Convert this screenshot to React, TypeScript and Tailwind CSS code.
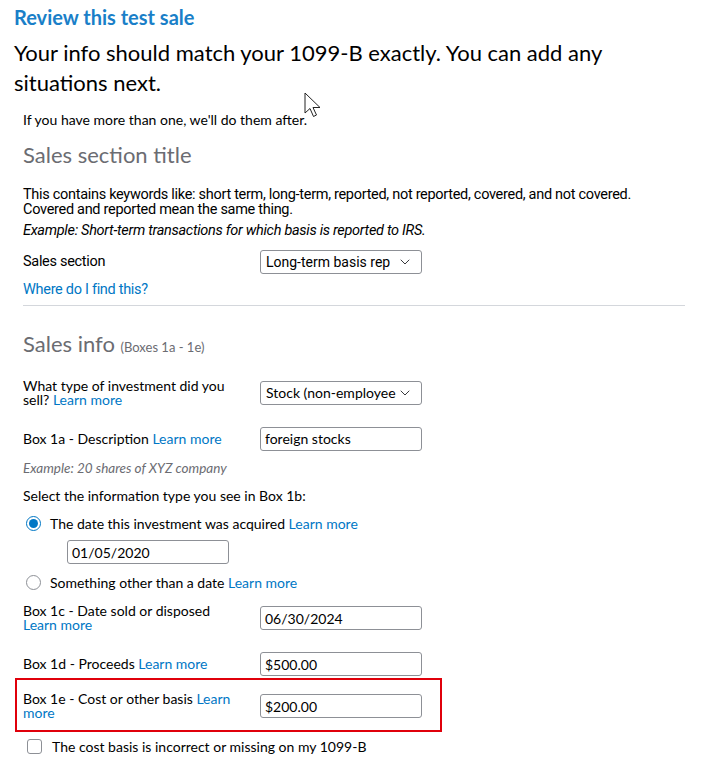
import { ChevronDown } from "lucide-react";

const link = "text-[#0077c5]";

function Select({ value }: { value: string }) {
  return (
    <div className="flex h-[24px] w-[162px] items-center justify-between overflow-hidden rounded-[3px] border border-[#8d9096] pl-[5px] pr-[8px]">
      <span className="overflow-hidden whitespace-nowrap text-[14px] text-black">{value}</span>
      <ChevronDown className="h-4 w-4 shrink-0 text-[#393a3d]" strokeWidth={1.5} />
    </div>
  );
}

function Input({ value }: { value: string }) {
  return (
    <div className="flex h-[24px] w-[162px] items-center rounded-[3px] border border-[#8d9096] px-[4px] text-[14px] text-black">
      {value}
    </div>
  );
}

function Row({ label, field, className = "" }: { label: React.ReactNode; field: React.ReactNode; className?: string }) {
  return (
    <div className={`flex items-center ${className}`}>
      <div className="w-[237px] pr-[26px] text-[14px] leading-[14px] text-black">{label}</div>
      {field}
    </div>
  );
}

export default function App() {
  return (
    <div className="relative h-[766px] w-[703px] overflow-hidden bg-white font-['Lato',sans-serif] text-black">
      <div className="px-[14px] pt-[5px]">
        <h1 className="text-[20px] font-bold leading-[24px] text-[#1a7fc8]">Review this test sale</h1>
        <h2 className="mt-[9px] text-[22px] leading-[30px] text-black">
          Your info should match your 1099-B exactly. You can add any situations next.
        </h2>
      </div>

      <div className="px-[23px]">
        <p className="mt-[14px] text-[14px] leading-[16px]">If you have more than one, we'll do them after.</p>

        <h3 className="mt-[14px] text-[22px] leading-[26px] text-[#6b6c72]">Sales section title</h3>

        <div className="mt-[19px] font-['Roboto',sans-serif] text-[14.5px] leading-[15px] tracking-[-0.3px]">
          <p>
            This contains keywords like: short term, long-term, reported, not reported, covered, and not covered.
            <br />
            Covered and reported mean the same thing.
          </p>
          <p className="mt-[6px] italic">Example: Short-term transactions for which basis is reported to IRS.</p>
        </div>

        <div className="mt-[12px] flex items-center font-['Roboto',sans-serif]">
          <div className="w-[237px] text-[14.5px] tracking-[-0.3px]">Sales section</div>
          <Select value="Long-term basis rep" />
        </div>
        <p className={`mt-[5px] font-['Roboto',sans-serif] text-[14.5px] tracking-[-0.3px] ${link}`}>Where do I find this?</p>
        <div className="mt-[4px] h-px w-[662px] bg-[#d4d7dc]" />

        <h3 className="mt-[25px] text-[22px] leading-[26px] text-[#6b6c72]">
          Sales info <span className="text-[13px]">(Boxes 1a - 1e)</span>
        </h3>

        <Row
          className="mt-[19px]"
          label={
            <>
              What type of investment did you sell? <span className={link}>Learn more</span>
            </>
          }
          field={<Select value="Stock (non-employee" />}
        />
        <Row
          className="mt-[20px]"
          label={
            <>
              Box 1a - Description <span className={link}>Learn more</span>
            </>
          }
          field={<Input value="foreign stocks" />}
        />
        <p className="mt-[7px] text-[13.5px] italic text-[#6b6c72]">Example: 20 shares of XYZ company</p>
        <p className="mt-[7px] text-[14px]">Select the information type you see in Box 1b:</p>

        <div className="mt-[7px] flex items-center gap-[9px] pl-[3px]">
          <span className="flex h-[15px] w-[15px] items-center justify-center rounded-full border border-[#0077c5]">
            <span className="h-[9px] w-[9px] rounded-full bg-[#0077c5]" />
          </span>
          <span className="text-[14px]">
            The date this investment was acquired <span className={link}>Learn more</span>
          </span>
        </div>
        <div className="mt-[6px] pl-[44px]">
          <Input value="01/05/2020" />
        </div>
        <div className="mt-[8px] flex items-center gap-[9px] pl-[3px]">
          <span className="h-[15px] w-[15px] rounded-full border border-[#8d9096]" />
          <span className="text-[14px]">
            Something other than a date <span className={link}>Learn more</span>
          </span>
        </div>

        <Row
          className="mt-[11px]"
          label={
            <>
              Box 1c - Date sold or disposed <br />
              <span className={link}>Learn more</span>
            </>
          }
          field={<Input value="06/30/2024" />}
        />
        <Row
          className="mt-[20px]"
          label={
            <>
              Box 1d - Proceeds <span className={link}>Learn more</span>
            </>
          }
          field={<Input value="$500.00" />}
        />
      </div>

      <div className="ml-[15px] mt-[2px] w-[427px] border-2 border-[#e0000b] pb-[10px] pl-[6px] pt-[12px]">
        <Row
          label={
            <>
              Box 1e - Cost or other basis <span className={link}>Learn more</span>
            </>
          }
          field={<Input value="$200.00" />}
        />
      </div>

      <div className="ml-[27px] mt-[4px] flex items-center gap-[10px]">
        <span className="h-[15px] w-[15px] rounded-[3px] border border-[#8d9096]" />
        <span className="text-[14px]">The cost basis is incorrect or missing on my 1099-B</span>
      </div>

      {/* mouse pointer captured in the screenshot */}
      <svg className="absolute left-[304px] top-[92px]" width="18" height="27" viewBox="0 0 18 27">
        <path d="M1 1 L1 21 L6 16.5 L9.5 24.5 L12.5 23 L9 15.5 L16 15.5 Z" fill="white" stroke="#222" strokeWidth="1" strokeLinejoin="round" />
      </svg>
    </div>
  );
}
